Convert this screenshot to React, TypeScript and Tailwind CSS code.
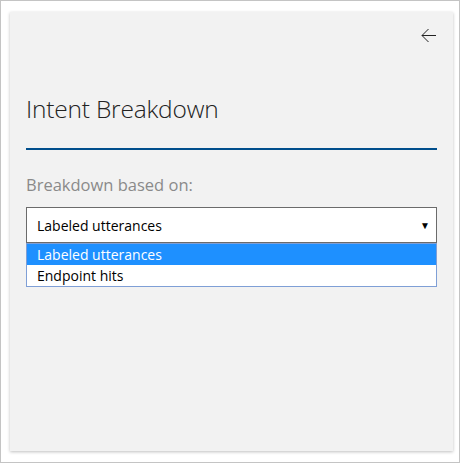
import { useState } from "react";

const options = ["Labeled utterances", "Endpoint hits"];

export default function App() {
  const [selected, setSelected] = useState(0);

  return (
    <div className="w-[460px] h-[463px] border border-[#c4c4c4] bg-white pt-[11px] pl-[9px] font-['Open_Sans',sans-serif]">
      <div className="w-[443px] h-[439px] bg-[#f2f2f2] shadow-[0_1px_3px_rgba(0,0,0,0.25)] flex flex-col px-4">
        <div className="flex justify-end pt-[16px] pr-[1px]">
          <button className="w-[15px] h-[15px] text-[#222]">
            <svg viewBox="0 0 15 15" width="15" height="15" fill="none" stroke="currentColor" strokeWidth="1">
              <path d="M15 7.5H1M7.5 1L1 7.5L7.5 14" />
            </svg>
          </button>
        </div>

        <h1 className="mt-[51px] text-[24.5px] leading-[30px] font-light text-[#222] tracking-[-0.2px]">
          Intent Breakdown
        </h1>
        <div className="mt-[24px] h-[2px] bg-[#004e8c]" />

        <p className="mt-[25px] text-[16.5px] leading-5 text-[#8a8a8a]">Breakdown based on:</p>

        <div className="mt-[12px]">
          <div className="h-[36px] border border-[#6b6b6b] bg-white flex items-center justify-between pl-[10px] pr-[6px]">
            <span className="text-[14px] text-black">{options[selected]}</span>
            <span className="text-[10px] text-black">▼</span>
          </div>
          <ul className="border border-[#7f9fd6] bg-white">
            {options.map((o, i) => (
              <li
                key={o}
                onClick={() => setSelected(i)}
                className={
                  i === selected
                    ? "h-[21px] pl-[10px] text-[14px] leading-[21px] bg-[#1e90ff] text-white"
                    : "h-[21px] pl-[10px] text-[14px] leading-[21px] text-black"
                }
              >
                {o}
              </li>
            ))}
          </ul>
        </div>
      </div>
    </div>
  );
}
